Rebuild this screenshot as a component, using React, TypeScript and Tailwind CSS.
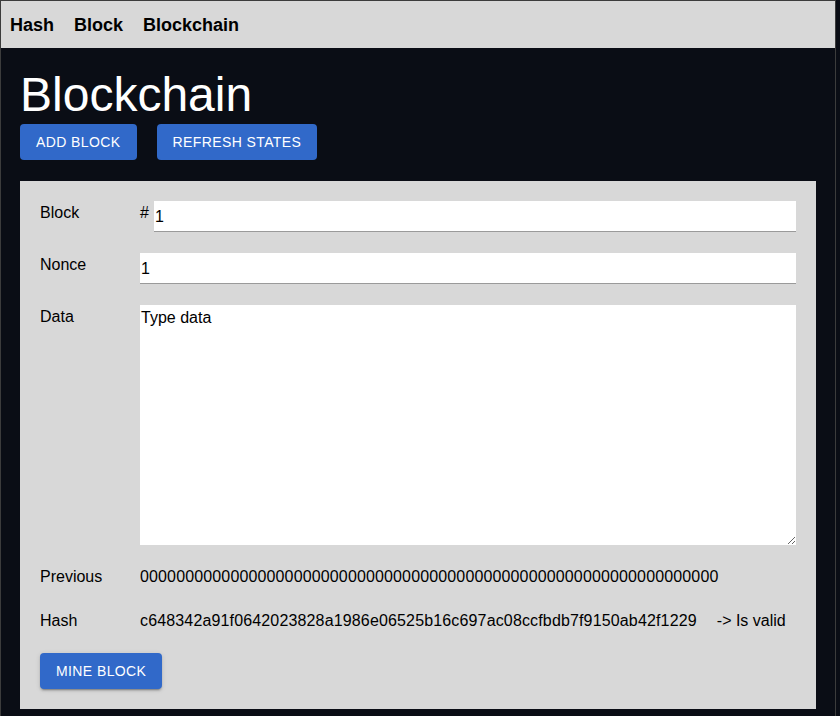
import { useState } from 'react';

const navItems = ['Hash', 'Block', 'Blockchain'];

const btn =
  'h-9 rounded px-4 text-[14px] font-medium uppercase tracking-[0.4px] text-white bg-[#3169c9] hover:bg-[#2a5bb0]';

export default function App() {
  const [blockNo, setBlockNo] = useState('1');
  const [nonce, setNonce] = useState('1');
  const [data, setData] = useState('');

  const previous = '0'.repeat(64);
  const hash = 'c648342a91f0642023828a1986e06525b16c697ac08ccfbdb7f9150ab42f1229';

  return (
    <div
      className="min-h-[716px] w-[840px] bg-[#0a0d15]"
      style={{ fontFamily: '"Liberation Sans", Arial, sans-serif' }}
    >
      <div className="w-[836px] min-h-[716px] border-x border-t border-[#3c3c3c]">
        {/* top nav */}
        <nav className="flex h-[47px] items-center gap-5 bg-[#d8d8d8] pl-[9px] text-[18px] font-bold text-black">
          {navItems.map((item) => (
            <a key={item} href="#" className="leading-none">
              {item}
            </a>
          ))}
        </nav>

        <div className="px-[19px]">
          <h1 className="mt-[23px] text-[48px] leading-[48px] text-white">Blockchain</h1>

          <div className="mt-[5px] flex gap-5">
            <button className={btn}>Add Block</button>
            <button className={btn}>Refresh States</button>
          </div>

          {/* block card */}
          <div className="mt-[21px] bg-[#d8d8d8] p-5 text-[16px] text-black">
            <div className="flex h-[31px] items-start">
              <span className="w-[100px] pt-[3px] leading-[18px]">Block</span>
              <span className="w-[14px] pt-[3px] leading-[18px]">#</span>
              <input
                value={blockNo}
                onChange={(e) => setBlockNo(e.target.value)}
                className="h-[31px] flex-1 border-b border-[#9a9a9a] bg-white px-[1px] pt-[2px] text-[16px] outline-none"
              />
            </div>

            <div className="mt-[21px] flex h-[31px] items-start">
              <span className="w-[100px] pt-[3px] leading-[18px]">Nonce</span>
              <input
                value={nonce}
                onChange={(e) => setNonce(e.target.value)}
                className="h-[31px] flex-1 border-b border-[#9a9a9a] bg-white px-[1px] pt-[2px] text-[16px] outline-none"
              />
            </div>

            <div className="mt-[21px] flex items-start">
              <span className="w-[100px] pt-[3px] leading-[18px]">Data</span>
              <textarea
                value={data}
                onChange={(e) => setData(e.target.value)}
                placeholder="Type data"
                className="h-[240px] flex-1 bg-white px-[1px] pt-[4px] text-[16px] leading-[18px] outline-none placeholder:text-black"
              />
            </div>

            <div className="mt-[23px] flex leading-[18px]">
              <span className="w-[100px]">Previous</span>
              <span className="tracking-[0.14px]">{previous}</span>
            </div>

            <div className="mt-[26px] flex leading-[18px]">
              <span className="w-[100px]">Hash</span>
              <span className="tracking-[0.15px]">{hash}</span>
              <span className="ml-5">-&gt; Is valid</span>
            </div>

            <button className={`${btn} mt-[23px] shadow-[0_3px_1px_-2px_rgba(0,0,0,0.2),0_2px_2px_0_rgba(0,0,0,0.14),0_1px_5px_0_rgba(0,0,0,0.12)]`}>
              Mine Block
            </button>
          </div>
        </div>
      </div>
    </div>
  );
}
